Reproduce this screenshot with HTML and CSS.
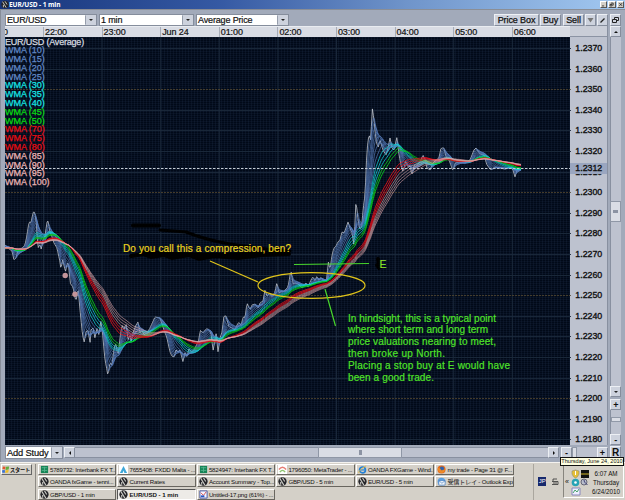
FILE: index.html
```html
<!DOCTYPE html>
<html>
<head>
    <meta charset="utf-8">
    <title>EUR/USD - 1 min</title>
    <link rel="stylesheet" href="styles.css">
</head>
<body>
    <svg width="0" height="0" class="defs">
        <symbol id="oanda" viewBox="0 0 10 10"><circle cx="5" cy="5" r="4.6" fill="#242428"/><path d="M2 1.5 6.5 9M5 1l2.5 4M3 5.5v3" stroke="#c9c9c4" stroke-width="1.2" fill="none"/></symbol>
        <symbol id="ifx" viewBox="0 0 10 10"><path fill="#168457" d="M1 1h8v8H1z"/><path d="M2 3h6M2 6h6M5 2v6" stroke="#54b48c"/></symbol>
        <symbol id="fxdd" viewBox="0 0 10 10"><path fill="#fff" d="M0 0h10v10H0z"/><path d="M5 1 1 9h3l1-3 1 3h3z" fill="#3da7d8"/></symbol>
        <symbol id="meta" viewBox="0 0 10 10"><path fill="#fff" d="M0 0h10v10H0z"/><path d="M1 5q4-5 8 0" stroke="#e77d74" stroke-width="1.5" fill="none"/><path d="M2 8q3-4 6 0" stroke="#8fc770" stroke-width="1.5" fill="none"/></symbol>
        <symbol id="ie" viewBox="0 0 10 10"><circle cx="5" cy="5.5" r="3.3" fill="none" stroke="#2481d6" stroke-width="1.8"/><path d="M2 5.5h6" stroke="#2481d6" stroke-width="1.3"/><path d="M1 9Q0 6 9 1" stroke="#e9b93a" fill="none"/></symbol>
        <symbol id="fox" viewBox="0 0 10 10"><circle cx="5" cy="5" r="4.5" fill="#e56b1c"/><circle cx="5.5" cy="4" r="2.4" fill="#2f62ab"/><path d="M1 3q3 0 4 3l4-1q-1 4-4 4T1 5z" fill="#ef8b26"/></symbol>
        <symbol id="mail" viewBox="0 0 10 10"><circle cx="5" cy="5" r="4.3" fill="#5b9fe0"/><path d="M2 4h7v5H2z" fill="#f3f7fb" stroke="#3773ba" stroke-width=".7"/><path d="m2 4 3.5 3L9 4" fill="none" stroke="#3773ba" stroke-width=".7"/></symbol>
        <symbol id="paint" viewBox="0 0 10 10"><path fill="#f6f6ff" stroke="#4253a0" d="M1 1h8v8H1z"/><path d="m2 3 3 3 3-4" stroke="#d24747" fill="none"/><path d="M2 7h4" stroke="#2756c4" stroke-width="2"/></symbol>
    </svg>

    <div class="titlebar">
        <svg class="ico"><use href="#oanda"/></svg>
        <span>EUR/USD - 1 min</span>
        <div class="winbtns">
            <svg viewBox="0 0 7 7"><path d="M1 5.5h3"/></svg>
            <svg viewBox="0 0 7 7"><path d="M2.5 2V1.500h3v3H5M1 3.500h3v2H1z"/></svg>
            <svg viewBox="0 0 7 7"><path d="m1.500 1.500 4 4m0-4-4 4"/></svg>
        </div>
    </div>

    <div class="window">
        <div class="toolbar">
            <div class="combo pair"><span>EUR/USD</span><i class="arrow down"></i></div>
            <div class="combo period"><span>1 min</span><i class="arrow down"></i></div>
            <div class="combo price"><span>Average Price</span><i class="arrow down"></i></div>
            <div class="tools">
                <span class="btn pb">Price Box</span>
                <span class="btn buy">Buy</span>
                <span class="btn sell">Sell</span>
                <svg class="btn tool" viewBox="0 0 9 10"><path d="M1.500 3 4.500 7.500 7.500 3z" fill="#777"/></svg>
                <svg class="btn tool" viewBox="0 0 9 10"><path d="m2.500 7.500 4-4" stroke="#222" stroke-width="1.3"/></svg>
                <svg class="btn tool pop" viewBox="0 0 9 10"><path d="M3.500 4V2.500h4v3H6M1.500 4.500h4v3h-4z" fill="none" stroke="#222"/></svg>
            </div>
        </div>

        <div class="main">
            <div class="chartcol">
                <div class="times">
                    <span class="first">0</span><span>22:00</span><span>23:00</span><span>Jun 24</span><span>01:00</span><span>02:00</span><span>03:00</span><span>04:00</span><span>05:00</span><span>06:00</span>
                </div>
                <div class="plot">
                    <svg class="chart" id="chart" viewBox="5 37 566 408" width="566" height="408">
                        <g id="grid"></g>
                        <g class="marker"><path d="M133 225.500h26" /><path d="M160 230l26 2q20 8 44 12t60 7" class="thin"/><path d="M131 256l12-2 8 3 13-2 8 3 17-3 10 4 15-3 24 2 24-3 27-1M142 252q70 6 146-1"/><path d="M378 259l2 10-3-4"/></g>
                        <g id="lines"></g>
                        <path d="M5 168.500H571" class="last"/>
                        <circle cx="65.200" cy="275.500" r="2.700" class="dot"/><circle cx="75" cy="294.300" r="2.700" class="dot"/>
                        <g class="yellow">
                            <ellipse cx="311.500" cy="285.500" rx="53.500" ry="12.800"/>
                            <path d="M210 261 258 282"/>
                            <text x="123" y="251.500" textLength="168">Do you call this a compression, ben?</text>
                        </g>
                        <g class="green">
                            <path d="M294 264.500 369 263.500M325 289 335.500 326"/>
                            <text x="379.500" y="268" class="e">E</text>
                            <text x="348" y="321.500" textLength="148">In hindsight, this is a typical point</text>
                            <text x="348" y="333.300" textLength="140">where short term and long term</text>
                            <text x="348" y="345.100" textLength="148">price valuations nearing to meet,</text>
                            <text x="348" y="356.900" textLength="97">then broke up North.</text>
                            <text x="348" y="368.700" textLength="162">Placing a stop buy at E would have</text>
                            <text x="348" y="380.500" textLength="86">been a good trade.</text>
                        </g>
                    </svg>
                    <div class="legend">
                        <div class="avg">EUR/USD (Average)</div>
                        <div class="b">WMA (10)</div><div class="b">WMA (15)</div><div class="b">WMA (20)</div><div class="b">WMA (25)</div>
                        <div class="c">WMA (30)</div><div class="c">WMA (35)</div><div class="c">WMA (40)</div>
                        <div class="g">WMA (45)</div><div class="g">WMA (50)</div>
                        <div class="r">WMA (70)</div><div class="r">WMA (75)</div><div class="r">WMA (80)</div>
                        <div class="p">WMA (85)</div><div class="p">WMA (90)</div><div class="p">WMA (95)</div><div class="p">WMA (100)</div>
                    </div>
                </div>
            </div>
            <div class="axis">
                <div class="axishead"></div>
                <div class="prices">
                    <span>1.2370</span><span>1.2360</span><span>1.2350</span><span>1.2340</span><span>1.2330</span><span>1.2320</span><span>1.2310</span><span>1.2300</span><span>1.2290</span><span>1.2280</span><span>1.2270</span><span>1.2260</span><span>1.2250</span><span>1.2240</span><span>1.2230</span><span>1.2220</span><span>1.2210</span><span>1.2200</span><span>1.2190</span><span>1.2180</span>
                    <b>1.2312</b>
                </div>
            </div>
            <div class="vscroll">
                <i class="arrow up"></i>
                <div class="vtrack"><div class="vthumb"></div></div>
                <i class="arrow down"></i>
                <i class="zoomer plus">+</i>
                <div class="vzoom"><div></div></div>
                <i class="zoomer">-</i>
            </div>
        </div>

        <div class="bottom">
            <div class="combo study"><span>Add Study</span><i class="arrow down"></i></div>
            <i class="arrow left"></i>
            <div class="htrack"><div class="hthumb"></div></div>
            <i class="arrow right"></i>
            <i class="zoomer hminus">-</i>
            <div class="hzoom"><div></div></div>
            <i class="zoomer hplus">+</i>
            <i class="reset">R</i>
        </div>
    </div>

    <div class="taskbar">
        <div class="start"><svg viewBox="0 0 9 9"><path fill="#e3562d" d="m1 1 3 .5-.5 3L.500 4z"/><path fill="#62ad3c" d="m4.500 1.500 3.500-.5-.5 3.500-3.500.500z"/><path fill="#3b71d2" d="m.5 5 3 .3-.5 3-3-.5z"/><path fill="#edbd28" d="m4 5.300 3.500-.3-.5 3-3.500.5z"/></svg>スタート</div>
        <div class="tasks">
            <div class="task"><svg><use href="#ifx"/></svg><span>5789732: Interbank FX T...</span></div>
            <div class="task"><svg><use href="#fxdd"/></svg><span>7655408: FXDD Malta - ...</span></div>
            <div class="task"><svg><use href="#ifx"/></svg><span>5824947: Interbank FX T...</span></div>
            <div class="task"><svg><use href="#meta"/></svg><span>1796050: MetaTrader - ...</span></div>
            <div class="task"><svg><use href="#ie"/></svg><span>OANDA FXGame - Wind...</span></div>
            <div class="task"><svg><use href="#fox"/></svg><span>my trade - Page 31 @ F...</span></div>
            <div class="task"><svg><use href="#oanda"/></svg><span>OANDA fxGame - tenni...</span></div>
            <div class="task"><svg><use href="#oanda"/></svg><span>Current Rates</span></div>
            <div class="task"><svg><use href="#oanda"/></svg><span>Account Summary - Top...</span></div>
            <div class="task"><svg><use href="#oanda"/></svg><span>GBP/USD - 5 min</span></div>
            <div class="task"><svg><use href="#oanda"/></svg><span>EUR/USD - 5 min</span></div>
            <div class="task"><svg><use href="#mail"/></svg><span>受信トレイ - Outlook Exp...</span></div>
            <div class="task"><svg><use href="#oanda"/></svg><span>GBP/USD - 1 min</span></div>
            <div class="task active"><svg><use href="#oanda"/></svg><span>EUR/USD - 1 min</span></div>
            <div class="task"><svg><use href="#paint"/></svg><span>Untitled-17.png (61%) - ...</span></div>
        </div>
        <div class="lang"><b>JP</b><svg viewBox="0 0 8 9"><path d="M2 4V2h4M1 4.500h6v3H1M2 6h4" fill="none" stroke="#333" stroke-width=".8"/></svg></div>
        <div class="tray">
            <span class="chev">«</span>
            <svg viewBox="0 0 18 27"><path d="m1 2 3.500-1L8 2v3q-1 3-3.500 4Q2 8 1 5z" fill="#e5bf35" stroke="#8d8a72" stroke-width=".6"/><path d="M4.500 2v4" stroke="#fff"/><path d="M10 1h8v8h-8z" fill="#111"/><path d="M10 5h8" stroke="#d4b828"/><circle cx="4.500" cy="13.500" r="3.800" fill="#27a3b5"/><circle cx="4.500" cy="13.500" r="1.300" fill="#fff"/><circle cx="13" cy="13" r="3" fill="#b8bdcc" stroke="#667"/><path d="m13 11 .5 2 3 3" stroke="#447" fill="none"/><path d="M1 19h8v7H1z" fill="#eef" stroke="#88b"/><path d="m2 24 2-3 2 2 2-3" stroke="#49a56b" fill="none"/></svg>
            <div class="clock">6:07 AM<br>Thursday<br>6/24/2010</div>
        </div>
        <div class="tooltip">Thursday, June 24, 2010</div>
    </div>
    <script src="chart.js"></script>
</body>
</html>
```

FILE: styles.css
```css
* {
    box-sizing: border-box;
}
body {
    margin: 0;
    width: 625px;
    height: 500px;
    overflow: hidden;
    display: flex;
    flex-direction: column;
    font-family: "Liberation Sans", "Noto Sans CJK JP", sans-serif;
    color: #111;
    background: #a2aaba;
}
i {
    font-style: normal;
}
.defs {
    position: absolute;
}
.titlebar {
    height: 9px;
    flex: none;
    display: flex;
    align-items: center;
    padding: 0 1px 0 1px;
    background: linear-gradient(to right, #16347a, #3559a3 35%, #6f94ca 65%, #a3c9f1);
    color: #fff;
    font: bold 6.600px/9px "Noto Sans", sans-serif;
    letter-spacing: -.1px;
}
.titlebar .ico {
    width: 8px;
    height: 9px;
}
.winbtns {
    margin-left: auto;
    display: flex;
}
.winbtns svg {
    width: 7.500px;
    height: 7px;
    margin-left: 1px;
    background: #d4d0c8;
    border: 1px solid;
    border-color: #fff #555 #555 #fff;
    fill: none;
    stroke: #111;
}
.window {
    height: 453px;
    flex: none;
    padding: 4px 4px 0 4px;
    border-top: 1px solid #8b8e95;
    border-left: 1px solid #878d99;
    display: flex;
    flex-direction: column;
}
.toolbar {
    height: 12px;
    flex: none;
    display: flex;
}
.combo {
    height: 12px;
    display: flex;
    background: #fff;
    border: 1px solid #858d9c;
    font-size: 9px;
    letter-spacing: -.15px;
    line-height: 11px;
    white-space: nowrap;
    padding-left: 1px;
    -webkit-text-stroke: .2px #111;
}
.combo span {
    flex: 1;
}
.pair {
    width: 92px;
}
.period {
    width: 95px;
    margin-left: 2px;
}
.price {
    width: 93px;
    margin-left: 2px;
}
.arrow, .zoomer, .reset {
    display: flex;
    flex: none;
    align-items: center;
    justify-content: center;
    width: 11px;
    height: 11px;
    background: #cdd2dd;
    border: 1px solid;
    border-color: #eceff4 #858d9c #858d9c #eceff4;
    font: bold 9px/8px "Liberation Sans", sans-serif;
}
.combo .arrow {
    height: 10px;
    border-color: #cdd2dd;
    border-left-color: #969dab;
}
.arrow::before {
    content: "";
    border: 2px solid transparent;
}
.down::before {
    border-top-color: #222;
    margin-top: 2px;
}
.up::before {
    border-bottom-color: #111;
    margin-top: -2px;
}
.left::before {
    border-right-color: #111;
    margin-left: -2px;
}
.right::before {
    border-left-color: #111;
    margin-left: 2px;
}
.tools {
    margin-left: auto;
    display: flex;
    gap: 1px;
}
.btn {
    height: 12px;
    background: #cdd2dd;
    border: 1px solid;
    border-color: #edf0f5 #858d9c #858d9c #edf0f5;
    font-size: 9px;
    letter-spacing: -.1px;
    line-height: 11px;
    text-align: center;
    white-space: nowrap;
    -webkit-text-stroke: .25px #111;
}
.pb {
    width: 45px;
}
.buy {
    width: 21px;
}
.sell {
    width: 21px;
    margin-left: 1px;
}
.tool {
    width: 11px;
}
.tool.pop {
    margin-left: 1px;
}
.main {
    height: 419px;
    flex: none;
    display: flex;
}
.chartcol {
    width: 566px;
    display: flex;
    flex-direction: column;
}
.times {
    height: 11px;
    flex: none;
    display: flex;
    background: #d9dce4;
    overflow: hidden;
    border-top: 1px solid #e9ecf1;
}
.times span {
    width: 58.600px;
    flex: none;
    border-left: 1px solid #a6acb8;
    padding-left: 1px;
    font-size: 9px;
    letter-spacing: -.1px;
    line-height: 10px;
    -webkit-text-stroke: .2px #111;
}
.times .first {
    width: 38px;
    border: 0;
    padding: 0;
    text-indent: -2px;
}
.plot {
    height: 408px;
    position: relative;
    background-color: #010918;
    background-image:
        repeating-linear-gradient(to right, rgba(50, 72, 105, .15) 0, rgba(50, 72, 105, .15) 1px, transparent 1px, transparent 3px),
        repeating-linear-gradient(to bottom, rgba(50, 72, 105, .13) 0, rgba(50, 72, 105, .13) 1px, transparent 1px, transparent 2px);
}
.chart {
    position: absolute;
    left: 0;
    top: 0;
}
.chart polyline, .chart path, .chart ellipse {
    fill: none;
}
.gridline {
    stroke: #1c2a3c;
    stroke-width: .9;
}
.half {
    stroke: #54472f;
    stroke-width: .8;
    stroke-dasharray: 2 1;
}
.marker {
    stroke: #000;
    stroke-width: 4;
    stroke-linecap: round;
}
.marker .thin {
    stroke-width: 3;
}
.last {
    stroke: #c3cbd4;
    stroke-dasharray: 2.500 1.500;
}
.dot {
    fill: #c4959a;
}
.yellow, .green {
    font-size: 10px;
    stroke-width: 1.2;
}
.yellow {
    stroke: #e0c41a;
}
.green {
    stroke: #48d62c;
}
.chart text {
    stroke-width: .2;
}
.yellow text {
    fill: #f1da20;
}
.green text {
    fill: #52ec28;
}
.green .e {
    font-size: 10.500px;
    fill: #a5e62b;
}
.legend {
    position: relative;
    padding-top: .5px;
    font-size: 9px;
    line-height: 8.800px;
    -webkit-text-stroke: .25px;
}
.legend div {
    height: 8.800px;
    white-space: nowrap;
    letter-spacing: -.05px;
}
.legend .avg {
    color: #d8dce0;
    letter-spacing: -.2px;
}
.b {
    color: #6189c8;
}
.c {
    color: #17e5e5;
}
.g {
    color: #08dd12;
}
.r {
    color: #e80d12;
}
.p {
    color: #ebb5b5;
}
.axis {
    width: 38px;
    flex: none;
    background: #bdc2cf;
    border-right: 1px solid #8890a0;
}
.axishead {
    height: 11px;
    background: #c9cdd7;
    border-bottom: 1px solid #8b93a3;
}
.prices {
    position: relative;
    padding-top: 1px;
    height: 408px;
    overflow: hidden;
}
.prices span, .prices b {
    display: block;
    height: 20.600px;
    line-height: 20.600px;
    padding-left: 5px;
    font-size: 8.800px;
    font-weight: normal;
    -webkit-text-stroke: .35px #111;
}
.prices b {
    position: absolute;
    top: 126px;
    left: 0;
    width: 37px;
    height: 11px;
    line-height: 11px;
    background: #9aa6c0;
}
.vscroll {
    margin-left: 2px;
    width: 11px;
    display: flex;
    flex-direction: column;
}
.vtrack {
    height: 349px;
    background: #bdc2cf;
    border-left: 1px solid #8890a0;
    padding-top: 164px;
}
.vthumb, .hthumb {
    background: #dadde5;
    border: 1px solid #8f97a6;
    display: flex;
    align-items: center;
    justify-content: center;
}
.vthumb {
    height: 21px;
    margin-left: -1px;
}
.vthumb::before, .hthumb::before {
    content: "";
    width: 5px;
    height: 3px;
    background: #8c93a3;
}
.plus {
    margin-top: 2px;
}
.vzoom {
    height: 24px;
    background: #bdc2cf;
    border-left: 1px solid #8890a0;
    padding-top: 7px;
}
.vzoom div {
    height: 5px;
    background: #dadde5;
    border: 1px solid #9199a8;
}
.bottom {
    margin-top: 1px;
    height: 13px;
    flex: none;
    display: flex;
    align-items: center;
}
.study {
    width: 58px;
    height: 13px;
    font-size: 9.300px;
    line-height: 12px;
}
.study .arrow {
    height: 11px;
}
.left {
    margin-left: 1px;
}
.htrack {
    width: 473px;
    height: 11px;
    padding-left: 243px;
    background: #bdc2cf;
    border-top: 1px solid #8890a0;
    border-bottom: 1px solid #8890a0;
}
.hthumb {
    width: 84px;
    height: 11px;
    margin-top: -1px;
}
.hthumb::before {
    width: 3px;
    height: 5px;
}
.hminus {
    margin-left: 2px;
}
.hzoom {
    width: 25px;
    height: 11px;
    background: #bdc2cf;
}
.hzoom div {
    width: 5px;
    height: 11px;
    background: #dadde5;
    border: 1px solid #9199a8;
}
.reset {
    margin-left: 2px;
    height: 13px;
    font-size: 10px;
}
.taskbar {
    position: relative;
    height: 38px;
    display: flex;
    background: #d4d0c8;
    border-top: 1px solid #f4f2ef;
    padding: 1px 1px 0;
    font-size: 6.100px;
}
.start {
    width: 31px;
    height: 11px;
    display: flex;
    align-items: center;
    border: 1px solid;
    border-color: #fff #666 #666 #fff;
    font: bold 5.200px/8px "Noto Sans CJK JP", sans-serif;
    letter-spacing: -.2px;
    white-space: nowrap;
}
.start svg {
    width: 8px;
    height: 9px;
    flex: none;
}
.tasks {
    margin-left: 3px;
    padding-left: 2px;
    border-left: 1px solid #8d8a84;
    width: 482px;
    display: grid;
    grid-template-columns: repeat(6, 78.200px);
    grid-auto-rows: 11px;
    gap: 1.300px;
}
.task {
    display: flex;
    align-items: center;
    padding-left: 1px;
    border: 1px solid;
    border-color: #fff #69665f #69665f #fff;
    line-height: 9px;
    letter-spacing: -.2px;
    white-space: nowrap;
    overflow: hidden;
}
.task svg {
    width: 9px;
    height: 9px;
    flex: none;
    margin-right: 1px;
}
.active {
    background: #edebe7;
    border-color: #555 #fff #fff #555;
    font-weight: bold;
    letter-spacing: 0;
}
.lang {
    margin-left: 17px;
    border-left: 1px solid #aaa69e;
    width: 30px;
    padding: 13px 0 0 4px;
    display: flex;
}
.lang b {
    width: 8px;
    height: 9px;
    background: #17296d;
    color: #fff;
    font: 6px/9px "Liberation Sans", sans-serif;
    text-align: center;
}
.lang svg {
    width: 8px;
    height: 9px;
    margin-left: 5px;
}
.tray {
    margin-left: auto;
    width: 61px;
    height: 34px;
    padding: 4px 0 0 1px;
    border: 1px solid;
    border-color: #88857e #fff #fff #88857e;
    display: flex;
}
.chev {
    width: 6px;
    padding-top: 8px;
    line-height: 9px;
    font-size: 7px;
}
.tray svg {
    width: 18px;
    height: 27px;
}
.clock {
    flex: 1;
    text-align: center;
    font-size: 6.300px;
    line-height: 9px;
    white-space: nowrap;
}
.tooltip {
    position: absolute;
    right: 1px;
    top: -6px;
    width: 64px;
    height: 9px;
    border: 1px solid #111;
    background: #ffffe1;
    font-size: 5.600px;
    line-height: 7px;
    text-align: center;
    white-space: nowrap;
}
```

FILE: chart.js
```javascript
const NS = 'http://www.w3.org/2000/svg';
const grid = document.getElementById('grid');
const lines = document.getElementById('lines');

function add(parent, tag, attrs) {
    const el = document.createElementNS(NS, tag);
    for (const k in attrs) el.setAttribute(k, attrs[k]);
    parent.appendChild(el);
}

// hour lines and price lines
for (let i = 0; i < 9; i++) {
    const x = 43.5 + i * 58.6;
    add(grid, 'path', { d: `M${x} 37V445`, class: 'gridline' });
}
for (let i = 0; i < 20; i++) {
    const y = Math.round(48 + i * 20.6) + 0.5;
    add(grid, 'path', { d: `M5 ${y}H571`, class: i % 5 === 2 ? 'half' : 'gridline' });
}

// average price, turning points
const pts = [
    -120,250, -90,243, -60,250, -30,244, -10,252, 0,248, 5,245, 8,248, 12,251, 14,260, 16,258, 18,250, 22,248, 25,245, 27,235,
    29,222, 31,223, 33,213, 34,211, 36,218, 37,235, 38,248, 40,244, 41,250, 43,240, 45,236, 47,222, 48,221,
    50,232, 52,237, 54,243, 57,248, 60,262, 61,269, 63,258, 64,267, 66,272, 67,262, 69,266, 70,283, 73,287,
    76,302, 78,287, 80,310, 82,330, 84,343, 86,332, 88,330, 90,343, 91,330, 93,328, 95,338, 97,328, 99,335,
    101,320, 103,338, 105,360, 107,370, 108,376, 110,362, 112,366, 114,348, 116,343, 118,357, 120,338,
    122,325, 124,330, 126,323, 128,340, 130,335, 131,342, 133,333, 136,325, 138,322, 140,333, 142,330,
    144,335, 147,333, 150,328, 155,317, 160,318, 164,330, 167,338, 170,352, 172,356, 174,357, 176,350,
    178,352, 180,350, 183,362, 185,352, 187,357, 189,348, 191,352, 194,350, 197,344, 199,340, 200,330,
    203,333, 206,329, 208,329, 211,333, 213,351, 215,340, 216,333, 218,352, 220,338, 222,332, 224,316,
    226,316, 229,327, 232,328, 235,330, 237,325, 239,322, 241,326, 243,317, 245,318, 247,303, 250,310,
    252,305, 255,304, 258,308, 260,303, 263,301, 265,290, 267,296, 270,293, 272,297, 275,292, 277,282,
    279,294, 281,291, 283,292, 285,290, 288,287, 291,270, 293,284, 295,283, 298,284, 302,288, 306,283,
    308,287, 311,280, 313,277, 315,281, 317,276, 319,281, 321,277, 324,282, 327,280, 328,260, 330,270,
    332,255, 334,248, 336,246, 338,242, 340,240, 342,232, 344,233, 346,228, 348,222, 350,228, 352,233,
    354,245, 356,200, 358,220, 360,230, 362,225, 363,210, 365,195, 367,150, 369,134, 371,142, 372,106,
    374,120, 376,140, 378,148, 380,140, 383,150, 386,155, 388,148, 390,138, 392,148, 394,150, 397,137,
    399,155, 401,165, 403,172, 406,160, 408,168, 410,165, 412,176, 414,165, 417,165, 420,162, 423,155,
    425,160, 427,168, 430,170, 433,163, 436,160, 439,158, 441,148, 444,148, 446,157, 449,160, 452,168,
    453,171, 455,163, 460,162, 465,163, 470,160, 474,150, 476,148, 480,154, 484,155, 487,165, 491,170,
    495,167, 500,168, 505,169, 510,167, 513,170, 515,177, 517,170, 521,168
];

// one sample per minute
const step = 0.977;
const xs = [];
const price = [];
let k = 0;
for (let x = -120; x <= 521; x += step) {
    while (k < pts.length - 4 && pts[k + 2] < x) k += 2;
    const t = (x - pts[k]) / (pts[k + 2] - pts[k]);
    xs.push(x);
    price.push(pts[k + 1] + t * (pts[k + 3] - pts[k + 1]));
}

function wma(n) {
    return price.map((p, i) => {
        let sum = 0;
        let w = 0;
        for (let j = 0; j < n && i - j >= 0; j++) {
            sum += price[i - j] * (n - j);
            w += n - j;
        }
        return sum / w;
    });
}

function draw(data, color, width) {
    const p = [];
    data.forEach((y, i) => {
        if (xs[i] >= 4) p.push(xs[i].toFixed(1) + ',' + y.toFixed(1));
    });
    add(lines, 'polyline', { points: p.join(' '), stroke: color, 'stroke-width': width });
}

draw(price, '#c3c8d0', 0.8);
[4, 7, 10, 13, 16, 20, 25].forEach(n => draw(wma(n), '#587fc0', 0.65));
[30, 35, 40].forEach(n => draw(wma(n), '#14cbd0', 0.8));
[45, 50].forEach(n => draw(wma(n), '#08c91c', 0.9));
[70, 75, 80].forEach(n => draw(wma(n), '#e0101a', 0.9));
[85, 90, 95, 100].forEach(n => draw(wma(n), '#d9a3a6', 0.65));
```
